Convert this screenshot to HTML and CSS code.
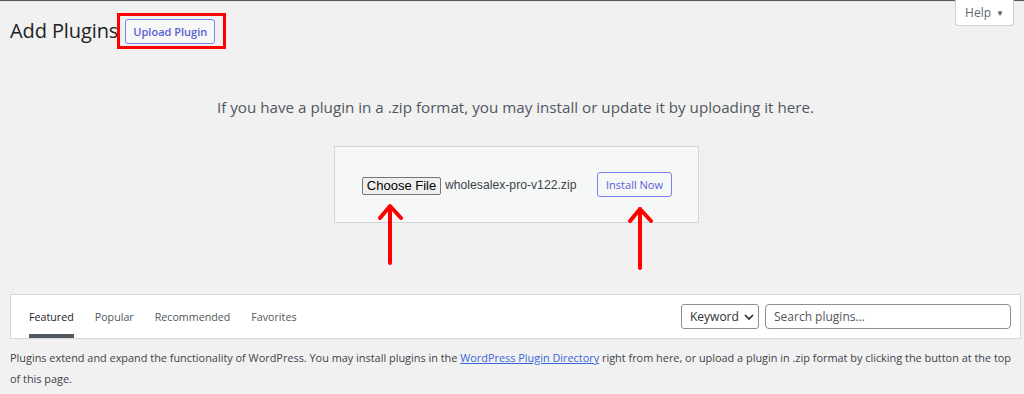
FILE: index.html
```html
<!DOCTYPE html>
<html>
<head>
<meta charset="utf-8">
<link rel="stylesheet" href="styles.css">
</head>
<body>
<div class="topstrip"></div>
<div class="help-tab">Help <span class="caret">▼</span></div>
<div class="wrap">
  <div class="header">
    <h1 class="title">Add Plugins</h1>
    <span class="annot-box"><button class="btn-outline upload-btn">Upload Plugin</button></span>
  </div>
  <p class="install-help">If you have a plugin in a .zip format, you may install or update it by uploading it here.</p>
  <div class="form-row">
    <div class="upload-form">
      <span class="file-btn">Choose File</span>
      <span class="file-name">wholesalex-pro-v122.zip</span>
      <span class="btn-outline install-btn">Install Now</span>
    </div>
  </div>
  <div class="filter-bar">
    <ul class="tabs">
      <li class="tab current">Featured</li>
      <li class="tab">Popular</li>
      <li class="tab">Recommended</li>
      <li class="tab">Favorites</li>
    </ul>
    <div class="search">
      <span class="select">Keyword <svg class="chev" width="10" height="6" viewBox="0 0 10 6"><path d="M1 1l4 4 4-4" fill="none" stroke="#1d2327" stroke-width="1.6"/></svg></span>
      <span class="search-input">Search plugins...</span>
    </div>
  </div>
  <p class="desc">Plugins extend and expand the functionality of WordPress. You may install plugins in the <a class="link">WordPress Plugin Directory</a> right from here, or upload a plugin in .zip format by clicking the button at the top of this page.</p>
</div>
<svg class="arrows" width="1024" height="394" viewBox="0 0 1024 394">
  <g fill="none" stroke="#ff0000" stroke-width="4" stroke-linecap="round" stroke-linejoin="round">
    <path d="M390 207V263"/>
    <path d="M380 218L390 206L401 218"/>
    <path d="M640 209V268"/>
    <path d="M630 221L640 209L651 221"/>
  </g>
</svg>
</body>
</html>
```
FILE: styles.css
```css
* { box-sizing: border-box; }
html, body { margin: 0; padding: 0; }
body {
  background: #f1f1f1;
  font-family: "Open Sans", "Noto Sans", sans-serif;
  color: #3c434a;
  width: 1024px;
  height: 394px;
  overflow: hidden;
  position: relative;
}
.topstrip {
  height: 2px;
  background: #5c5c5c;
  border-bottom: 1px solid #e6e6e6;
}
.help-tab {
  position: absolute;
  top: 0;
  right: 10px;
  width: 59px;
  height: 26px;
  background: #fff;
  border: 1px solid #d0d0d3;
  border-top: none;
  border-radius: 0 0 4px 4px;
  font-size: 12px;
  color: #646970;
  display: flex;
  align-items: center;
  justify-content: center;
  gap: 5px;
}
.caret { font-size: 8px; color: #50575e; }
.wrap { padding: 0 3px 0 10px; }
.header {
  display: flex;
  align-items: center;
  height: 53px;
  padding-top: 4px;
}
.title {
  margin: 0;
  font-size: 20px;
  font-weight: 400;
  color: #1d2327;
  letter-spacing: -0.1px;
}
.annot-box {
  display: inline-flex;
  border: 3px solid #ff0000;
  padding: 3px 8px 2px 5px;
  margin-left: -1px;
}
.btn-outline {
  display: inline-flex;
  align-items: center;
  border: 1px solid #7b80f0;
  background: #f6f7f7;
  color: #5a60d8;
  border-radius: 3px;
  font-family: inherit;
  font-size: 11px;
}
.upload-btn {
  height: 25px;
  width: 90px;
  justify-content: center;
  font-weight: 600;
  padding: 0;
}
.install-help {
  margin: 42px 0 0;
  text-align: center;
  font-size: 15.2px;
  color: #50575e;
  line-height: 20px;
}
.form-row {
  display: flex;
  justify-content: center;
  margin-top: 29px;
}
.upload-form {
  width: 365px;
  height: 77px;
  background: #f6f7f7;
  border: 1px solid #d6d6d8;
  display: flex;
  align-items: center;
  padding: 0 26px 0 27px;
  margin-left: 2px;
}
.file-btn {
  display: inline-flex;
  align-items: center;
  justify-content: center;
  width: 79px;
  height: 18px;
  background: #efefef;
  border: 1px solid #767676;
  border-radius: 2px;
  font-family: "Liberation Sans", Arial, sans-serif;
  font-size: 13px;
  color: #000;
  margin-top: 2px;
}
.file-name {
  margin-left: 4px;
  font-family: "Liberation Sans", Arial, sans-serif;
  font-size: 12.2px;
  color: #3c434a;
  margin-top: 1px;
}
.install-btn {
  margin-left: auto;
  width: 75px;
  height: 25px;
  justify-content: center;
  font-size: 11px;
  background: #f6f7f7;
}
.filter-bar {
  margin-top: 71px;
  height: 45px;
  background: #fff;
  border: 1px solid #d6d6d8;
  display: flex;
  align-items: stretch;
  justify-content: space-between;
  padding: 0 9px 0 18px;
}
.tabs {
  list-style: none;
  margin: 0;
  padding: 0;
  display: flex;
  gap: 21px;
}
.tab {
  font-size: 10.7px;
  color: #50575e;
  display: flex;
  align-items: center;
  border-bottom: 4px solid transparent;
  padding-top: 4px;
}
.tab.current {
  color: #1d2327;
  border-bottom-color: #50575e;
}
.search {
  display: flex;
  align-items: center;
  gap: 6px;
}
.select {
  width: 78px;
  height: 25px;
  border: 1px solid #8c8f94;
  border-radius: 3px;
  background: #fff;
  display: flex;
  align-items: center;
  padding-left: 8px;
  font-size: 12px;
  color: #2c3338;
  gap: 5px;
}
.chev { margin-top: 1px; }
.search-input {
  width: 246px;
  height: 25px;
  border: 1px solid #8c8f94;
  border-radius: 4px;
  background: #fff;
  display: flex;
  align-items: center;
  padding-left: 8px;
  font-size: 12px;
  color: #50575e;
}
.desc {
  margin: 8px 0 0;
  font-size: 10.9px;
  line-height: 21px;
  color: #3c434a;
  padding-right: 8px;
}
.link {
  color: #3b66d8;
  text-decoration: underline;
}
.arrows {
  position: absolute;
  left: 0;
  top: 0;
  pointer-events: none;
}
```
